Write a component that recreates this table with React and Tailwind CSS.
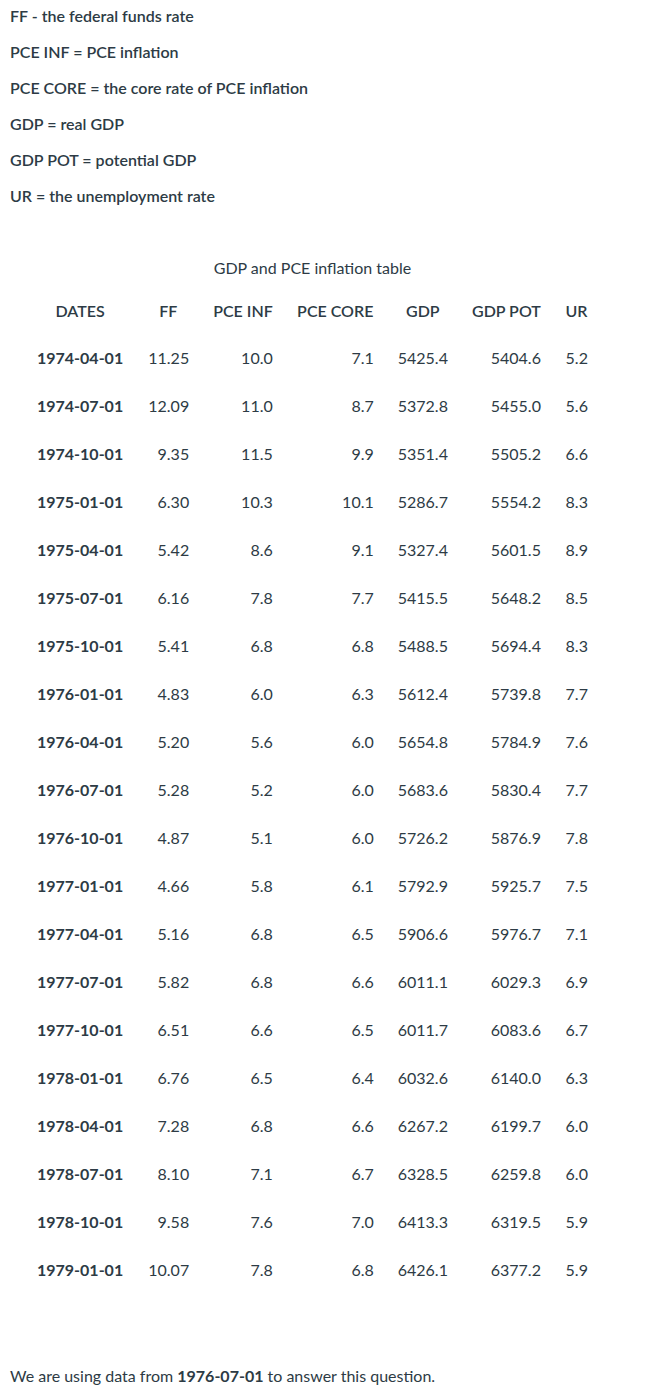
const DEFS = [
  "FF - the federal funds rate",
  "PCE INF = PCE inflation",
  "PCE CORE = the core rate of PCE inflation",
  "GDP = real GDP",
  "GDP POT = potential GDP",
  "UR = the unemployment rate",
]

const ROWS = [
  ["1974-04-01", "11.25", "10.0", "7.1", "5425.4", "5404.6", "5.2"],
  ["1974-07-01", "12.09", "11.0", "8.7", "5372.8", "5455.0", "5.6"],
  ["1974-10-01", "9.35", "11.5", "9.9", "5351.4", "5505.2", "6.6"],
  ["1975-01-01", "6.30", "10.3", "10.1", "5286.7", "5554.2", "8.3"],
  ["1975-04-01", "5.42", "8.6", "9.1", "5327.4", "5601.5", "8.9"],
  ["1975-07-01", "6.16", "7.8", "7.7", "5415.5", "5648.2", "8.5"],
  ["1975-10-01", "5.41", "6.8", "6.8", "5488.5", "5694.4", "8.3"],
  ["1976-01-01", "4.83", "6.0", "6.3", "5612.4", "5739.8", "7.7"],
  ["1976-04-01", "5.20", "5.6", "6.0", "5654.8", "5784.9", "7.6"],
  ["1976-07-01", "5.28", "5.2", "6.0", "5683.6", "5830.4", "7.7"],
  ["1976-10-01", "4.87", "5.1", "6.0", "5726.2", "5876.9", "7.8"],
  ["1977-01-01", "4.66", "5.8", "6.1", "5792.9", "5925.7", "7.5"],
  ["1977-04-01", "5.16", "6.8", "6.5", "5906.6", "5976.7", "7.1"],
  ["1977-07-01", "5.82", "6.8", "6.6", "6011.1", "6029.3", "6.9"],
  ["1977-10-01", "6.51", "6.6", "6.5", "6011.7", "6083.6", "6.7"],
  ["1978-01-01", "6.76", "6.5", "6.4", "6032.6", "6140.0", "6.3"],
  ["1978-04-01", "7.28", "6.8", "6.6", "6267.2", "6199.7", "6.0"],
  ["1978-07-01", "8.10", "7.1", "6.7", "6328.5", "6259.8", "6.0"],
  ["1978-10-01", "9.58", "7.6", "7.0", "6413.3", "6319.5", "5.9"],
  ["1979-01-01", "10.07", "7.8", "6.8", "6426.1", "6377.2", "5.9"],
]

const COLS = [
  { name: "DATES", w: "w-[110px]" },
  { name: "FF", w: "w-[66px]" },
  { name: "PCE INF", w: "w-[80px]" },
  { name: "PCE CORE", w: "w-[101px]" },
  { name: "GDP", w: "w-[74px]" },
  { name: "GDP POT", w: "w-[93px]" },
  { name: "UR", w: "w-[47px]" },
]

export default function App() {
  return (
    <div className="min-h-[1400px] bg-white px-[10px] pt-[4px] text-[16px] leading-[24px] text-[#2d3b45]" style={{ fontFamily: "Lato, 'Noto Sans', sans-serif" }}>
      <div className="flex flex-col gap-[12px] font-semibold">
        {DEFS.map((d) => (
          <p key={d}>{d}</p>
        ))}
      </div>

      <table className="ml-[15px] mt-[48px] table-fixed border-collapse">
        <caption className="pb-[8px] text-center">GDP and PCE inflation table</caption>
        <thead>
          <tr className="h-[46px]">
            {COLS.map((c) => (
              <th key={c.name} className={`${c.w} px-[12px] text-center font-semibold whitespace-nowrap`}>{c.name}</th>
            ))}
          </tr>
        </thead>
        <tbody>
          {ROWS.map((r) => (
            <tr key={r[0]} className="h-[48px]">
              <td className="px-[12px] text-center font-bold whitespace-nowrap">{r[0]}</td>
              {r.slice(1).map((v, i) => (
                <td key={i} className="px-[12px] text-right whitespace-nowrap">{v}</td>
              ))}
            </tr>
          ))}
        </tbody>
      </table>

      <p className="mt-[70px]">
        We are using data from <strong className="font-bold">1976-07-01</strong> to answer this question.
      </p>
    </div>
  )
}
